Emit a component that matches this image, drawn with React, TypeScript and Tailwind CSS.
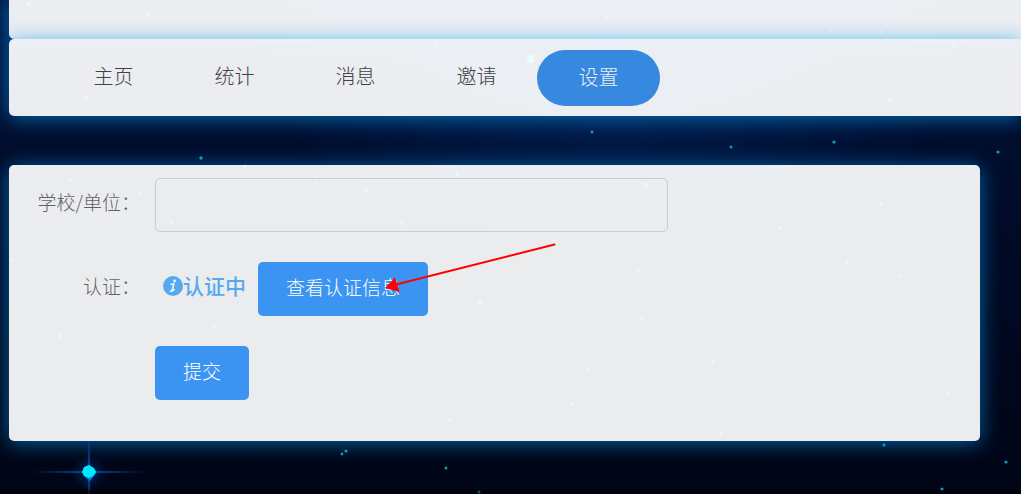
import type { ReactNode } from "react";

const PANEL =
  "bg-[rgba(254,255,255,0.925)] shadow-[0_2px_20px_rgba(0,150,240,0.65)]";

const BUTTON =
  "h-[54px] cursor-pointer rounded-[5px] bg-[#3b94f1] px-7 pb-1 text-[19px] text-white";

const STARS: [number, number, number][] = [
  [592, 132, 1.6], [731, 147, 1.5], [834, 142, 1.6], [998, 152, 1.6],
  [201, 158, 1.7], [342, 454, 1.4], [346, 451, 1.6], [446, 468, 1.5],
  [479, 492, 1.5], [884, 445, 1.6], [1006, 462, 1.6], [942, 489, 1.6],
  [29, 4, 2], [148, 15, 1.8], [86, 98, 1.8], [436, 44, 1.6], [606, 17, 1.7],
  [831, 31, 1.4], [881, 32, 2], [954, 45, 1.8], [890, 99, 1.8], [70, 180, 1.8],
  [245, 166, 1.6], [140, 193, 1.6], [171, 222, 1.8], [317, 178, 2], [457, 174, 1.6],
  [366, 190, 2], [402, 223, 2], [647, 185, 2], [638, 270, 1.8], [480, 303, 2.2],
  [642, 319, 1.8], [60, 336, 1.8], [214, 326, 1.6], [713, 362, 1.7], [947, 394, 1.7],
  [721, 434, 1.7], [450, 420, 1.7], [571, 404, 1.7], [588, 370, 1.4], [780, 228, 1.7],
  [881, 204, 1.7], [847, 262, 1.7], [899, 277, 1.7], [13, 259, 1.6],
];

const NAV = ["主页", "统计", "消息", "邀请", "设置"];

function Sky() {
  return (
    <svg
      className="pointer-events-none absolute inset-0 -z-10 h-full w-full"
      viewBox="0 0 1021 494"
      preserveAspectRatio="xMidYMid slice"
      aria-hidden="true"
    >
      <defs>
        <linearGradient id="night" x1="0" y1="0" x2="0" y2="1">
          <stop offset="0" stopColor="#021c4c" />
          <stop offset="0.3" stopColor="#000d2c" />
          <stop offset="1" stopColor="#000516" />
        </linearGradient>
        <radialGradient id="nebula" cx="0.6" cy="0.12" r="0.36">
          <stop offset="0" stopColor="#003074" stopOpacity="0.6" />
          <stop offset="1" stopColor="#003074" stopOpacity="0" />
        </radialGradient>
        <radialGradient id="flare">
          <stop offset="0" stopColor="#0a9cff" />
          <stop offset="0.35" stopColor="#0560c8" stopOpacity="0.6" />
          <stop offset="1" stopColor="#0448a0" stopOpacity="0" />
        </radialGradient>
      </defs>
      <rect width="1021" height="494" fill="url(#night)" />
      <rect width="1021" height="494" fill="url(#nebula)" />
      {STARS.map(([x, y, r]) => (
        <circle key={`${x}-${y}`} cx={x} cy={y} r={r} fill="#109cbc" />
      ))}
      <circle cx="531" cy="59" r="4" fill="#00f0ff" />
      <ellipse cx="89" cy="472" rx="62" ry="1.6" fill="url(#flare)" />
      <ellipse cx="89" cy="472" rx="1.8" ry="44" fill="url(#flare)" />
      <circle cx="89" cy="473" r="18" fill="url(#flare)" opacity="0.4" />
      <path d="M84 468l5-2 5 3 3 3-3 4-4 5-5-4-2-4z" fill="#0878d8" />
      <path d="M84 467l5-2 5 3 2 4-3 4-4 2-5-2-2-4z" fill="#00e8ff" />
      <rect y="490" width="1021" height="4" fill="#000" opacity="0.45" />
    </svg>
  );
}

function InfoIcon() {
  return (
    <svg className="h-5 w-5" viewBox="0 0 20 20" aria-hidden="true">
      <circle cx="10" cy="10" r="10" fill="#56a9f1" />
      <circle cx="11.6" cy="5" r="1.4" fill="#f3f8fc" />
      <path
        d="M8.2 8.300l2.700-.500-2 7M7.300 15.200l2.100-.200 1.800-1.400"
        fill="none"
        stroke="#f3f8fc"
        strokeWidth="1.5"
        strokeLinecap="round"
        strokeLinejoin="round"
      />
    </svg>
  );
}

function Pointer() {
  return (
    <svg
      className="pointer-events-none absolute -top-5 left-[126px] h-[52px] w-[174px]"
      viewBox="0 0 174 52"
      aria-hidden="true"
    >
      <path d="M12 42.5L170.500 2.500" stroke="#f00" strokeWidth="2" strokeLinecap="round" />
      <path d="M1 46L11 35.500 15.500 50z" fill="#f00" />
    </svg>
  );
}

function Row({ label, children }: { label?: ReactNode; children: ReactNode }) {
  return (
    <div className="flex h-[54px] items-center">
      <div className="w-[131px] shrink-0 pb-1.5 text-right text-[19px] text-[#606266]">
        {label}
      </div>
      <div className="ml-[15px] flex flex-1 items-center">{children}</div>
    </div>
  );
}

export default function App() {
  return (
    <div className="relative isolate min-h-screen overflow-hidden bg-[#000515] pl-[9px] font-['Noto_Sans_CJK_SC',sans-serif] font-light">
      <Sky />
      <header className={`h-[39px] rounded-bl-[5px] ${PANEL}`} />
      <nav className={`flex h-[77px] items-center rounded-l-[5px] pl-11 text-[20px] ${PANEL}`}>
        {NAV.map((name) => (
          <a
            key={name}
            href="#"
            aria-current={name === "设置" ? "page" : undefined}
            className={
              name === "设置"
                ? "flex h-14 w-[123px] items-center justify-center rounded-full bg-[#3788df] pb-0.5 text-[#eceef0]"
                : "flex h-14 w-[121px] items-center justify-center pb-1 text-[#404246]"
            }
          >
            {name}
          </a>
        ))}
      </nav>

      <form
        className={`mt-[49px] mr-[41px] flex flex-col gap-[30px] rounded-[5px] pt-[13px] pb-[41px] ${PANEL}`}
        onSubmit={(e) => e.preventDefault()}
      >
        <Row label={<label htmlFor="school">学校/单位：</label>}>
          <input
            id="school"
            type="text"
            className="h-[54px] w-full max-w-[513px] rounded-[5px] border border-[#c9ccd4] bg-transparent px-5 text-[18px] outline-none"
          />
        </Row>
        <Row label="认证：">
          <span className="ml-2 flex items-center pb-1.5 text-[21px] font-medium text-[#56a9f1]">
            <InfoIcon />
            认证中
          </span>
          <div className="relative ml-3">
            <button type="button" className={BUTTON}>
              查看认证信息
            </button>
            <Pointer />
          </div>
        </Row>
        <Row>
          <button type="submit" className={BUTTON}>
            提交
          </button>
        </Row>
      </form>
    </div>
  );
}
